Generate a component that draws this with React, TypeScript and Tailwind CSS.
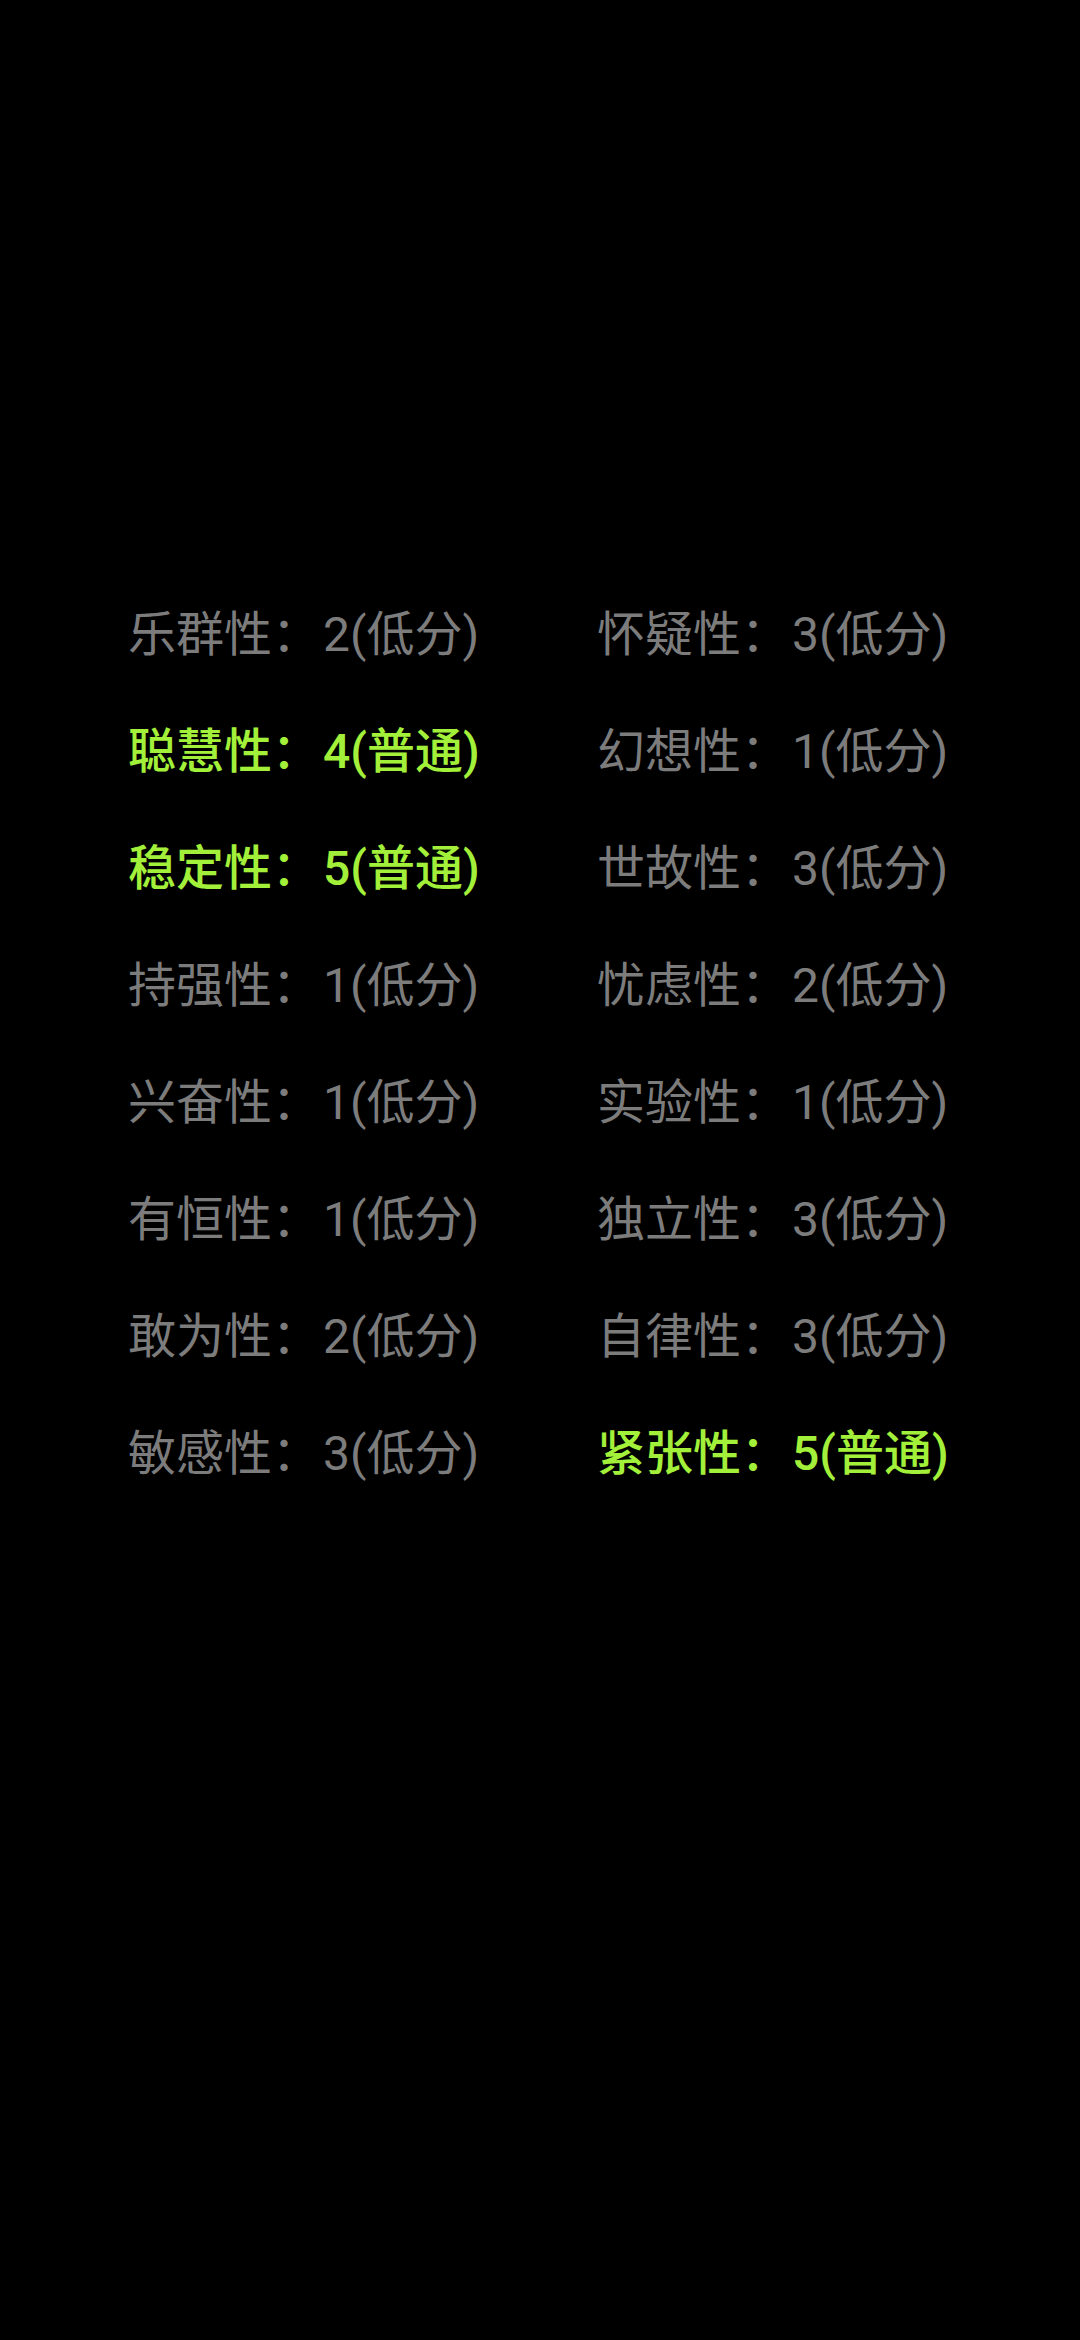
const rows: [string, string, boolean, string, string, boolean][] = [
    ["乐群性", "2(低分)", false, "怀疑性", "3(低分)", false],
    ["聪慧性", "4(普通)", true, "幻想性", "1(低分)", false],
    ["稳定性", "5(普通)", true, "世故性", "3(低分)", false],
    ["持强性", "1(低分)", false, "忧虑性", "2(低分)", false],
    ["兴奋性", "1(低分)", false, "实验性", "1(低分)", false],
    ["有恒性", "1(低分)", false, "独立性", "3(低分)", false],
    ["敢为性", "2(低分)", false, "自律性", "3(低分)", false],
    ["敏感性", "3(低分)", false, "紧张性", "5(普通)", true],
];

function Item({label, value, hi}: {label: string; value: string; hi: boolean}) {
    return (
        <div className={hi ? "h-[117px] flex items-center text-[#a3f03a] font-medium" : "h-[117px] flex items-center text-[#7c7c7c]"}>
            {label}：<span className="ml-[3px]">{value}</span>
        </div>
    );
}

export default function App() {
    return (
        <main
            className="w-[1080px] h-[2340px] bg-black pt-[576px] pl-[128px]"
            style={{fontFamily: 'Roboto, "Noto Sans CJK SC", sans-serif'}}
        >
            <div className="grid grid-cols-[469px_auto] text-[48px] leading-none">
                {rows.map((r, i) => (
                    <div key={i} className="contents">
                        <Item label={r[0]} value={r[1]} hi={r[2]}/>
                        <Item label={r[3]} value={r[4]} hi={r[5]}/>
                    </div>
                ))}
            </div>
        </main>
    );
}
